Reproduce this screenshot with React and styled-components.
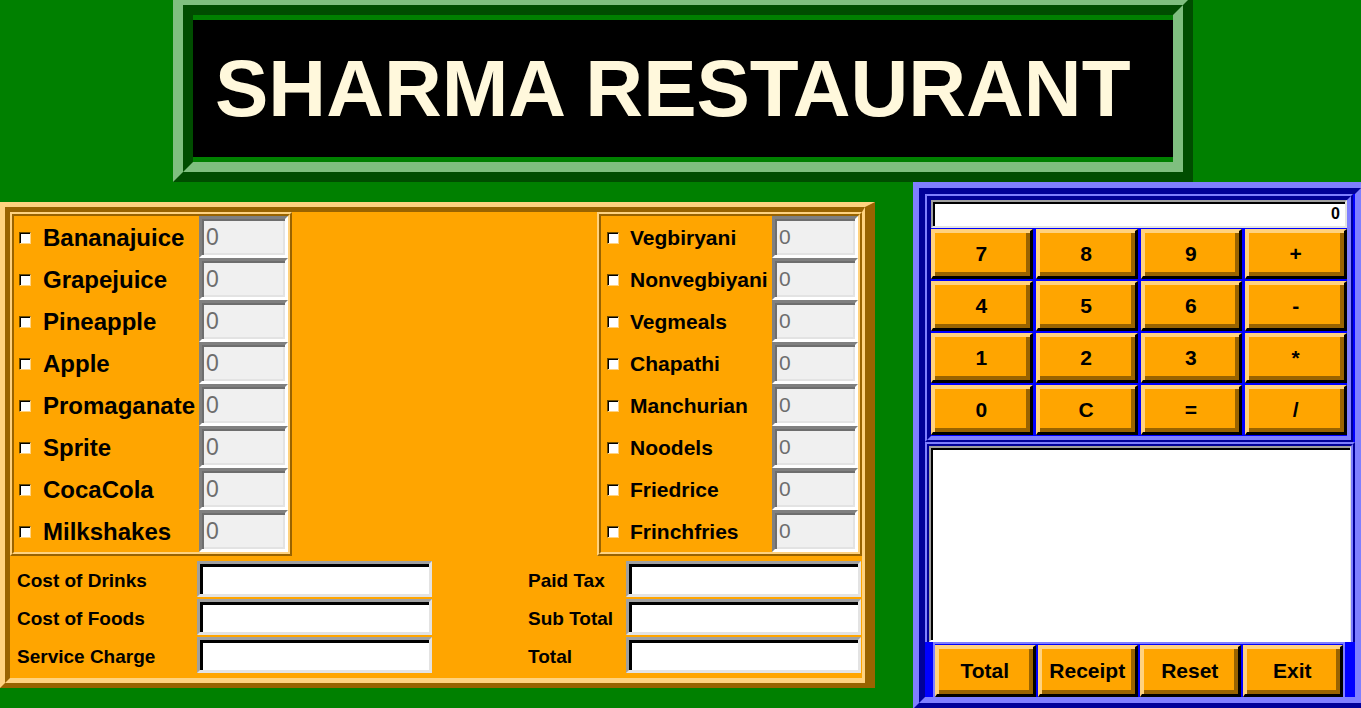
import styled, { createGlobalStyle, css } from "styled-components";

const GREEN = "#008000";
const G_LIGHT = "#7fbf7f";
const G_DARK = "#004d00";
const ORANGE = "#ffa500";
const Y_LIGHT = "#ffd27f";
const Y_DARK = "#996300";
const BLUE = "#0000ff";
const B_LIGHT = "#7f7fff";
const B_DARK = "#000099";

const drinks = [
  "Bananajuice",
  "Grapejuice",
  "Pineapple",
  "Apple",
  "Promaganate",
  "Sprite",
  "CocaCola",
  "Milkshakes",
];
const foods = [
  "Vegbiryani",
  "Nonvegbiyani",
  "Vegmeals",
  "Chapathi",
  "Manchurian",
  "Noodels",
  "Friedrice",
  "Frinchfries",
];
const keys = ["7", "8", "9", "+", "4", "5", "6", "-", "1", "2", "3", "*", "0", "C", "=", "/"];

const bevel = (w, tl, br) => css`
  border: ${w}px solid;
  border-color: ${tl} ${br} ${br} ${tl};
`;

const GlobalStyle = createGlobalStyle`
  html, body {
    margin: 0;
    padding: 0;
    background: ${GREEN};
  }
  body {
    font-family: "Liberation Sans", Arial, sans-serif;
    overflow: hidden;
  }
  * {
    box-sizing: border-box;
  }
`;

const Page = styled.div`
  width: 1361px;
  height: 708px;
  overflow: hidden;
  background: ${GREEN};
`;

const TitleFrame = styled.header`
  margin: -5px 0 0 173px;
  width: 1020px;
  height: 187px;
  ${bevel(10, G_LIGHT, G_DARK)}
`;

const TitleInner = styled.div`
  height: 100%;
  padding: 5px 0;
  background: ${GREEN};
  ${bevel(10, G_DARK, G_LIGHT)}
`;

const TitleLabel = styled.h1`
  margin: 0;
  height: 100%;
  display: flex;
  align-items: center;
  padding-left: 22px;
  padding-top: 1px;
  background: #000;
  color: #fff8dc;
  font: bold 80px/1 "Liberation Sans", Arial, sans-serif;
`;

const MainRow = styled.div`
  display: flex;
  align-items: flex-start;
`;

const OrderFrame = styled.section`
  flex-shrink: 0;
  margin-top: 20px;
  width: 875px;
  height: 486px;
  ${bevel(5, Y_LIGHT, Y_DARK)}
  border-right-width: 10px;
`;

const OrderInner = styled.div`
  height: 100%;
  display: flex;
  flex-direction: column;
  background: ${ORANGE};
  ${bevel(5, Y_DARK, Y_LIGHT)}
  border-right-width: 3px;
`;

const MenuRow = styled.div`
  display: flex;
  justify-content: space-between;
  height: 344px;
`;

const Panel = styled.div`
  width: ${(p) => p.$width}px;
  height: 100%;
  ${bevel(2, Y_LIGHT, Y_DARK)}
`;

const PanelInner = styled.div`
  height: 100%;
  display: flex;
  flex-direction: column;
  ${bevel(2, Y_DARK, Y_LIGHT)}
`;

const ItemRow = styled.label`
  display: flex;
  align-items: center;
  height: 42px;
  flex-shrink: 0;
  padding-left: ${(p) => p.$pad}px;
`;

const Check = styled.span`
  flex-shrink: 0;
  width: 12px;
  height: 12px;
  margin-top: 1px;
  background: #fff;
  border: 1px solid;
  border-color: #6b4a00 ${Y_LIGHT} ${Y_LIGHT} #6b4a00;
  box-shadow: inset 1px 1px 0 #000;
`;

const ItemName = styled.span`
  flex: 1;
  margin-left: ${(p) => p.$gap}px;
  padding-top: 1px;
  font-size: ${(p) => p.$size}px;
  font-weight: bold;
  color: #000;
  white-space: nowrap;
`;

const QtyEntry = styled.div`
  flex-shrink: 0;
  width: ${(p) => p.$width}px;
  height: 42px;
  display: flex;
  align-items: center;
  padding-left: 4px;
  background: #f0f0f0;
  border: 3px solid;
  border-color: #808080 #fff #fff #808080;
  box-shadow: inset 2px 2px 0 #6e6e6e, inset -2px -2px 0 #e3e3e3;
  color: #6d6d6d;
  font-size: ${(p) => p.$size}px;
`;

const CostArea = styled.div`
  display: flex;
  padding-top: 5px;
`;

const CostGroup = styled.div`
  display: grid;
  grid-template-columns: ${(p) => p.$label}px 235px;
  grid-auto-rows: 36px;
  row-gap: 2px;
  align-items: center;
  margin-left: ${(p) => p.$left}px;
`;

const CostLabel = styled.span`
  padding-top: 3px;
  font-size: 19px;
  font-weight: bold;
  color: #000;
`;

const CostEntry = styled.div`
  height: 36px;
  background: #fff;
  border: 3px solid;
  border-color: #a0a0a0 #e3e3e3 #e3e3e3 #a0a0a0;
  box-shadow: inset 3px 3px 0 #000;
`;

const CalcFrame = styled.aside`
  flex-shrink: 0;
  margin-left: 38px;
  width: 454px;
  height: 527px;
  ${bevel(6, B_LIGHT, B_DARK)}
`;

const CalcInner = styled.div`
  height: 100%;
  display: flex;
  flex-direction: column;
  background: ${BLUE};
  ${bevel(6, B_DARK, B_LIGHT)}
`;

const KeypadFrame = styled.div`
  width: 428px;
  height: 248px;
  flex-shrink: 0;
  ${bevel(2, B_LIGHT, B_DARK)}
`;

const KeypadInner = styled.div`
  height: 100%;
  display: flex;
  flex-direction: column;
  ${bevel(4, B_DARK, B_LIGHT)}
`;

const Display = styled.div`
  height: 28px;
  display: flex;
  align-items: center;
  justify-content: flex-end;
  padding-right: 5px;
  background: #fff;
  border: 2px solid;
  border-color: #a0a0a0 #e3e3e3 #e3e3e3 #a0a0a0;
  box-shadow: inset 2px 2px 0 #000;
  font-size: 16px;
  font-weight: bold;
  color: #000;
`;

const KeyGrid = styled.div`
  display: grid;
  grid-template-columns: repeat(4, 1fr);
  grid-auto-rows: 50px;
  column-gap: 3px;
  row-gap: 2px;
  padding-top: 1px;
`;

const Key = styled.button`
  display: flex;
  align-items: center;
  justify-content: center;
  padding: 0;
  height: ${(p) => p.$height || 50}px;
  background: ${ORANGE};
  border-style: solid;
  border-width: 2px 3px 3px 2px;
  border-color: ${Y_LIGHT} #000 #000 ${Y_LIGHT};
  box-shadow: inset 2px 2px 0 ${Y_LIGHT}, inset -4px -4px 0 ${Y_DARK};
  font-family: "Liberation Sans", Arial, sans-serif;
  font-size: 21px;
  font-weight: bold;
  color: #000;
`;

const ReceiptFrame = styled.div`
  width: 430px;
  height: 200px;
  flex-shrink: 0;
  ${bevel(2, B_LIGHT, B_DARK)}
  border-bottom: 0;
`;

const ReceiptInner = styled.div`
  height: 100%;
  display: flex;
  ${bevel(2, B_DARK, B_LIGHT)}
  border-bottom: 0;
`;

const ReceiptBox = styled.div`
  flex: 1;
  background: #fff;
  border: 2px solid;
  border-color: #a0a0a0 #e3e3e3 #fff #a0a0a0;
  border-right-width: 1px;
  box-shadow: inset 2px 2px 0 #000;
`;

const ButtonBar = styled.div`
  flex-shrink: 0;
  margin-left: 8px;
  width: 412px;
  height: 55px;
  display: grid;
  grid-template-columns: repeat(4, 1fr);
  column-gap: 2px;
  padding-top: 1px;
  border: 2px solid ${B_LIGHT};
  border-bottom: 0;
`;

const CostRows = ({ labels, left, labelWidth }) => (
  <CostGroup $left={left} $label={labelWidth}>
    {labels.flatMap((l) => [
      <CostLabel key={l}>{l}</CostLabel>,
      <CostEntry key={l + "-entry"} />,
    ])}
  </CostGroup>
);

export default function App() {
  return (
    <Page>
      <GlobalStyle />
      <TitleFrame>
        <TitleInner>
          <TitleLabel>SHARMA RESTAURANT</TitleLabel>
        </TitleInner>
      </TitleFrame>
      <MainRow>
        <OrderFrame>
          <OrderInner>
            <MenuRow>
              <Panel $width={282}>
                <PanelInner>
                  {drinks.map((d) => (
                    <ItemRow key={d} $pad={5}>
                      <Check />
                      <ItemName $gap={12} $size={24}>
                        {d}
                      </ItemName>
                      <QtyEntry $width={89} $size={23}>
                        0
                      </QtyEntry>
                    </ItemRow>
                  ))}
                </PanelInner>
              </Panel>
              <Panel $width={265}>
                <PanelInner>
                  {foods.map((f) => (
                    <ItemRow key={f} $pad={6}>
                      <Check />
                      <ItemName $gap={11} $size={21}>
                        {f}
                      </ItemName>
                      <QtyEntry $width={86} $size={21}>
                        0
                      </QtyEntry>
                    </ItemRow>
                  ))}
                </PanelInner>
              </Panel>
            </MenuRow>
            <CostArea>
              <CostRows
                left={7}
                labelWidth={180}
                labels={["Cost of Drinks", "Cost of Foods", "Service Charge"]}
              />
              <CostRows
                left={96}
                labelWidth={98}
                labels={["Paid Tax", "Sub Total", "Total"]}
              />
            </CostArea>
          </OrderInner>
        </OrderFrame>
        <CalcFrame>
          <CalcInner>
            <KeypadFrame>
              <KeypadInner>
                <Display>0</Display>
                <KeyGrid>
                  {keys.map((k) => (
                    <Key key={k}>{k}</Key>
                  ))}
                </KeyGrid>
              </KeypadInner>
            </KeypadFrame>
            <ReceiptFrame>
              <ReceiptInner>
                <ReceiptBox />
              </ReceiptInner>
            </ReceiptFrame>
            <ButtonBar>
              {["Total", "Receipt", "Reset", "Exit"].map((b) => (
                <Key key={b} $height={52}>
                  {b}
                </Key>
              ))}
            </ButtonBar>
          </CalcInner>
        </CalcFrame>
      </MainRow>
    </Page>
  );
}
